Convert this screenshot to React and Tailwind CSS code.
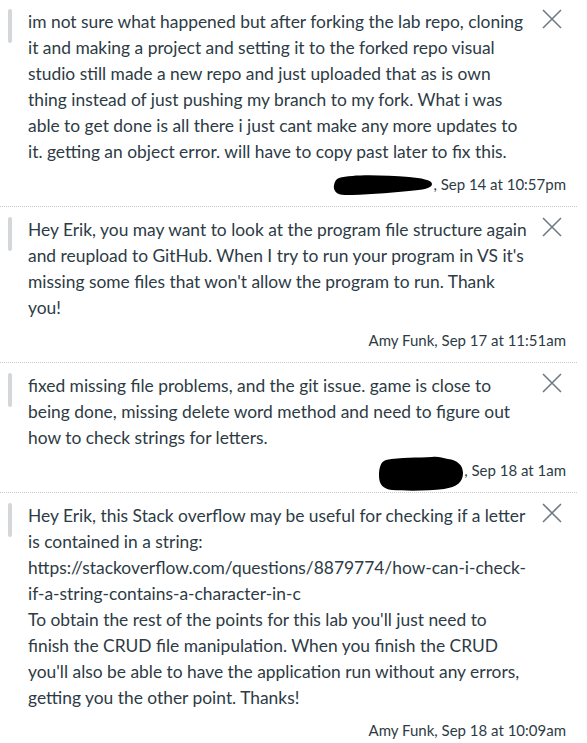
import React from 'react';

// lines kept as they wrap in the comment panel
const comments = [
  {
    id: 1,
    lines: [
      'im not sure what happened but after forking the lab repo, cloning',
      'it and making a project and setting it to the forked repo visual',
      'studio still made a new repo and just uploaded that as is own',
      'thing instead of just pushing my branch to my fork. What i was',
      'able to get done is all there i just cant make any more updates to',
      'it. getting an object error. will have to copy past later to fix this.',
    ],
    author: null,
    blob: 'a',
    date: 'Sep 14 at 10:57pm',
  },
  {
    id: 2,
    lines: [
      'Hey Erik, you may want to look at the program file structure again',
      "and reupload to GitHub. When I try to run your program in VS it's",
      "missing some files that won't allow the program to run. Thank",
      'you!',
    ],
    author: 'Amy Funk',
    date: 'Sep 17 at 11:51am',
  },
  {
    id: 3,
    lines: [
      'fixed missing file problems, and the git issue. game is close to',
      'being done, missing delete word method and need to figure out',
      'how to check strings for letters.',
    ],
    author: null,
    blob: 'b',
    date: 'Sep 18 at 1am',
  },
  {
    id: 4,
    lines: [
      'Hey Erik, this Stack overflow may be useful for checking if a letter',
      'is contained in a string:',
      'https://stackoverflow.com/questions/8879774/how-can-i-check-',
      'if-a-string-contains-a-character-in-c',
      "To obtain the rest of the points for this lab you'll just need to",
      'finish the CRUD file manipulation. When you finish the CRUD',
      "you'll also be able to have the application run without any errors,",
      'getting you the other point. Thanks!',
    ],
    author: 'Amy Funk',
    date: 'Sep 18 at 10:09am',
  },
];

// black marker scribbles over the student's name
const Redacted = ({ kind }) =>
  kind === 'a' ? (
    <span className="relative inline-block w-[100px] h-[14px] align-middle">
      <svg className="absolute left-0 top-[-5px]" width="100" height="22" viewBox="0 0 100 22">
        <path d="M6 4 C20 0 50 1 76 3 C88 4 99 6 99 10 C99 14 90 16 76 17 C55 19 30 21 12 21 C3 21 0 16 1 11 C2 7 3 5 6 4 Z" fill="#000" />
      </svg>
    </span>
  ) : (
    <span className="relative inline-block w-[86px] h-[14px] align-middle">
      <svg className="absolute left-0 top-[-9px]" width="86" height="36" viewBox="0 0 86 36">
        <path d="M8 4 C22 1 40 2 54 1 C60 0 64 2 70 3 C79 4 85 9 85 17 C85 26 79 31 66 33 C50 35 28 35 14 34 C5 33 1 28 1 20 C1 13 2 6 8 4 Z" fill="#000" />
      </svg>
    </span>
  );

const CloseIcon = () => (
  <svg width="20" height="20" viewBox="0 0 20 20" className="shrink-0">
    <path d="M1 1 L19 19 M19 1 L1 19" stroke="#6f7b84" strokeWidth="1.6" fill="none" />
  </svg>
);

const Comment = ({ c, first }) => (
  <div className={`w-[577px] pt-[10px] pb-[12px] ${first ? '' : 'border-t border-dotted border-[#c4c9cc]'}`}>
    <div className="flex items-start">
      <div className="ml-[8px] w-[4px] h-[34px] rounded-sm bg-[#d3d7da] shrink-0" />
      <p className="ml-[16px] w-[508px] whitespace-nowrap text-[17.4px] leading-[26px] text-[#2d3b45]">
        {c.lines.map((l, i) => (
          <span key={i} className="block">{l}</span>
        ))}
      </p>
      <div className="ml-[6px]">
        <CloseIcon />
      </div>
    </div>
    <div className="mt-[9px] pr-[11px] text-right text-[15px] leading-[20px] text-[#2d3b45]">
      {c.author ? c.author : <Redacted kind={c.blob} />}, {c.date}
    </div>
  </div>
);

export default function App() {
  return (
    <div className="bg-white min-h-[743px] w-[587px] overflow-hidden font-['Lato','Liberation_Sans',sans-serif]">
      <div className="-mt-px">
        {comments.map((c, i) => (
          <Comment key={c.id} c={c} first={i === 0} />
        ))}
      </div>
    </div>
  );
}
